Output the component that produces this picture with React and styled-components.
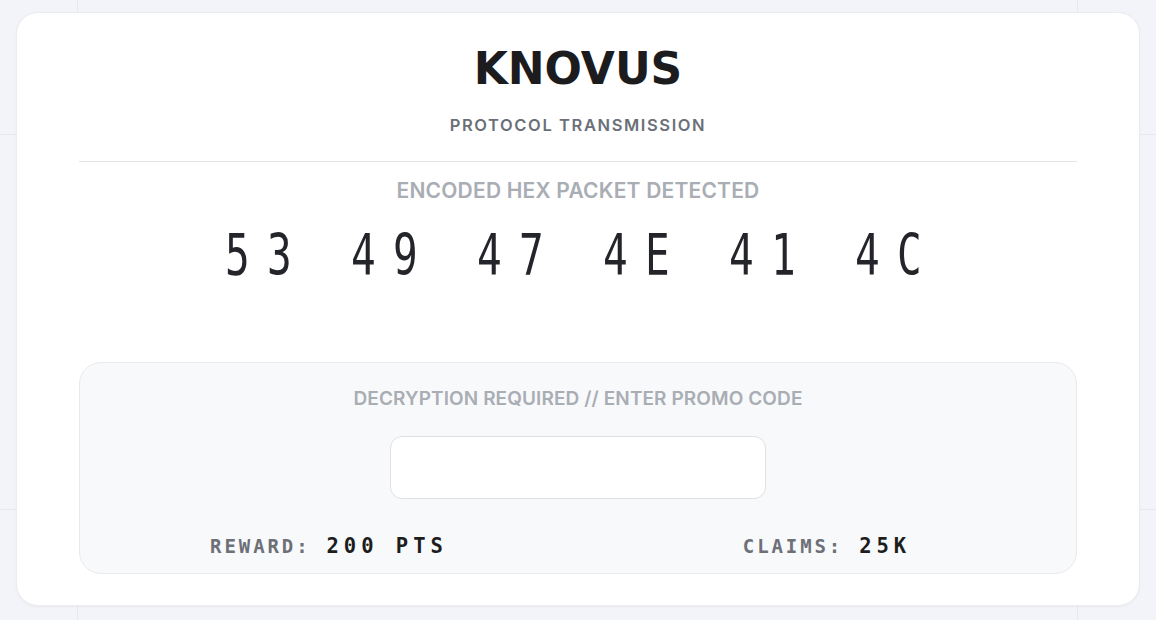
import styled, { createGlobalStyle } from 'styled-components'

const GlobalStyle = createGlobalStyle`
  * { box-sizing: border-box; }
  body {
    margin: 0;
    background: #f3f4f9;
    font-family: Inter, "Noto Sans", sans-serif;
  }
`

const Page = styled.div`
  min-height: 100vh;
  padding: 12px 16px;
  background-image:
    linear-gradient(to right, transparent 77px, #e8e9ef 77px, #e8e9ef 78px, transparent 78px),
    linear-gradient(to right, transparent 1077px, #e8e9ef 1077px, #e8e9ef 1078px, transparent 1078px),
    linear-gradient(to bottom, transparent 134px, #e8e9ef 134px, #e8e9ef 135px, transparent 135px),
    linear-gradient(to bottom, transparent 509px, #e8e9ef 509px, #e8e9ef 510px, transparent 510px);
`

const Card = styled.main`
  display: flex;
  flex-direction: column;
  align-items: center;
  padding: 34px 62px 31px;
  background: #ffffff;
  border: 1px solid #ebecf1;
  border-radius: 22px;
  box-shadow: 0 1px 3px rgba(20, 24, 40, 0.04);
`

const Title = styled.h1`
  margin: 0;
  font-family: "DejaVu Sans", sans-serif;
  font-weight: 700;
  font-size: 44px;
  line-height: 44px;
  color: #1c1c1f;
`

const Subtitle = styled.p`
  margin: 24px 0 0;
  font-size: 16.5px;
  line-height: 20px;
  font-weight: 600;
  letter-spacing: 1.6px;
  color: #6b6f78;
`

const Divider = styled.hr`
  align-self: stretch;
  margin: 26px 0 0;
  border: 0;
  height: 1px;
  background: #e3e4e8;
`

const Caption = styled.p`
  margin: ${p => p.$top}px 0 0;
  font-size: ${p => p.$size}px;
  line-height: ${p => p.$size + 3}px;
  font-weight: 600;
  letter-spacing: ${p => p.$spacing}px;
  color: #a9adb4;
  text-transform: uppercase;
`

const Hex = styled.div`
  margin-top: 24px;
  font-family: "DejaVu Sans Mono", monospace;
  font-size: 57px;
  line-height: 57px;
  letter-spacing: 24px;
  white-space: pre;
  color: #24252a;
  transform: scaleX(0.72);
  padding-left: 12px;
`

const Panel = styled.section`
  align-self: stretch;
  margin-top: 78px;
  display: flex;
  flex-direction: column;
  align-items: center;
  padding: 25px 0 15px;
  background: #f8f9fb;
  border: 1px solid #e9eaee;
  border-radius: 22px;
`

const CodeInput = styled.input`
  margin-top: 26px;
  width: 376px;
  height: 63px;
  padding: 0 16px;
  background: #ffffff;
  border: 1.5px solid #dfe0e4;
  border-radius: 12px;
  outline: none;
  font-family: "DejaVu Sans Mono", monospace;
  font-size: 20px;
  text-align: center;
`

const Stats = styled.div`
  align-self: stretch;
  margin-top: 35px;
  display: grid;
  grid-template-columns: 1fr 1fr;
`

const Stat = styled.div`
  display: flex;
  justify-content: center;
  align-items: baseline;
  gap: 16px;
  font-family: "DejaVu Sans Mono", monospace;
  font-weight: 700;
  line-height: 24px;
`

const StatLabel = styled.span`
  font-size: 19px;
  letter-spacing: 2.9px;
  color: #6d7077;
`

const StatValue = styled.span`
  font-size: 20.5px;
  letter-spacing: 5px;
  color: #1d1d20;
`

export default function App() {
  return (
    <>
      <GlobalStyle />
      <Page>
        <Card>
          <Title>KNOVUS</Title>
          <Subtitle>PROTOCOL TRANSMISSION</Subtitle>
          <Divider />
          <Caption $top={17} $size={21} $spacing={0.2}>Encoded hex packet detected</Caption>
          <Hex>53 49 47 4E 41 4C</Hex>
          <Panel>
            <Caption $top={0} $size={19} $spacing={0.1}>Decryption required // enter promo code</Caption>
            <CodeInput type="text" aria-label="Promo code" />
            <Stats>
              <Stat>
                <StatLabel>REWARD:</StatLabel>
                <StatValue>200 PTS</StatValue>
              </Stat>
              <Stat>
                <StatLabel>CLAIMS:</StatLabel>
                <StatValue>25K</StatValue>
              </Stat>
            </Stats>
          </Panel>
        </Card>
      </Page>
    </>
  )
}
